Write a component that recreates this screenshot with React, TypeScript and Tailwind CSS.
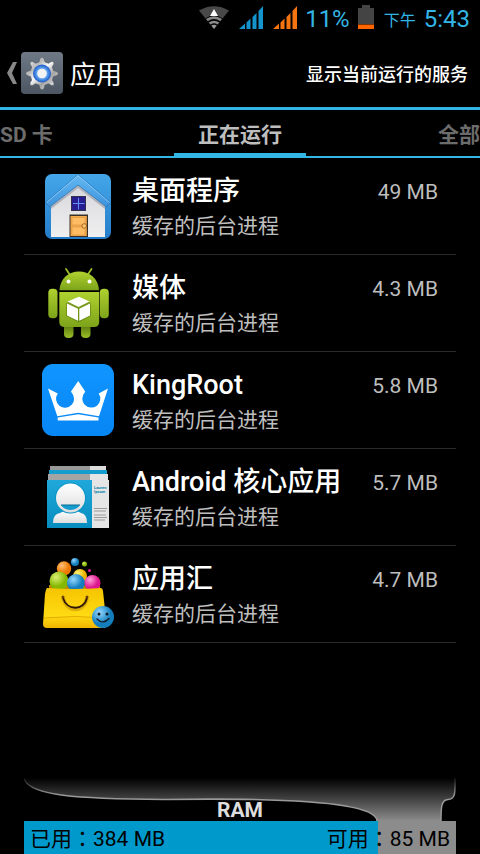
import { useState, type ReactNode } from 'react';
import { clsx } from 'clsx';

interface RunningApp {
  id: string;
  name: string;
  status: string;
  memory: string;
  icon: ReactNode;
}

const USED_MB = 384;
const FREE_MB = 85;

function WifiIcon() {
  return (
    <svg viewBox="0 0 30 23" className="h-[23px] w-[30px]" aria-hidden="true">
      <path d="M0 4.500Q15-4 30 4.500L15 23Z" fill="#484848" />
      <path d="M6.500 12.500Q15 6 23.500 12.500L15 23Z" fill="#000" />
      <path d="M7 13Q15 7.500 23 13L21.200 15.300Q15 10.800 8.800 15.300Z" fill="#858585" />
      <path d="M9.800 16.500Q15 12.800 20.200 16.500L18.500 18.600Q15 16 11.500 18.600Z" fill="#8d8d8d" />
      <path d="M12.300 19.500Q15 17.800 17.700 19.500L15 23Z" fill="#999" />
      <path d="M15 3L19 10H11Z" fill="#fff" />
    </svg>
  );
}

function SignalIcon({ color }: { color: string }) {
  return (
    <svg viewBox="0 0 24 23" className="h-[23px] w-6" fill={color} aria-hidden="true">
      <path d="M0 23L6 17.500V23ZM7.500 16.500L11.500 12.500V23H7.500ZM13.500 11L17.500 7V23H13.500ZM19.500 5L24 0V23H19.500Z" />
    </svg>
  );
}

function BatteryIcon() {
  return (
    <svg viewBox="0 0 16 24" className="h-6 w-4" aria-hidden="true">
      <path d="M4 0H12V3H16V19H0V3H4Z" fill="#444" />
      <path d="M0 19.500H16V24H0Z" fill="#f60" />
    </svg>
  );
}

function SettingsIcon() {
  return (
    <svg viewBox="0 0 42 42" className="size-[42px]" aria-hidden="true">
      <defs>
        <linearGradient id="settings-bg" x2="0" y2="1">
          <stop stopColor="#6f7a86" />
          <stop offset="1" stopColor="#4c5663" />
        </linearGradient>
        <linearGradient id="settings-gear" gradientUnits="userSpaceOnUse" x1="8" y1="8" x2="34" y2="35">
          <stop stopColor="#e8e8e8" />
          <stop offset=".25" stopColor="#b9b9b9" />
          <stop offset=".45" stopColor="#fafafa" />
          <stop offset=".7" stopColor="#a2a2a2" />
          <stop offset="1" stopColor="#f0f0f0" />
        </linearGradient>
        <radialGradient id="settings-ring">
          <stop offset=".45" stopColor="#7dbcff" />
          <stop offset="1" stopColor="#1758c6" />
        </radialGradient>
      </defs>
      <rect width="42" height="42" rx="4" fill="url(#settings-bg)" />
      <path
        d="M19 6.500Q21 4 23 6.500L24 10L27.500 11.300L30.500 9.500Q33.500 9 33 12L31.300 15L32.500 18.500L36 19.500Q38.500 21.500 36 23.500L32.500 24.500L31.300 28L33 31Q33.500 34 30.500 33.500L27.500 31.700L24 33L23 36.500Q21 39 19 36.500L18 33L14.500 31.700L11.500 33.500Q8.500 34 9 31L10.700 28L9.500 24.500L6 23.500Q3.500 21.500 6 19.500L9.500 18.500L10.700 15L9 12Q8.500 9 11.500 9.500L14.500 11.300L18 10Z"
        fill="url(#settings-gear)"
        stroke="#454e59"
        strokeWidth=".5"
      />
      <circle cx="21" cy="21.500" r="9" fill="url(#settings-ring)" />
      <circle cx="21" cy="21.500" r="4.800" fill="#f3f3f3" />
    </svg>
  );
}

function HomeAppIcon() {
  return (
    <svg viewBox="0 0 72 72" className="size-[72px]" aria-hidden="true">
      <defs>
        <linearGradient id="home-sky" x2="0" y2="1">
          <stop stopColor="#45a7ea" />
          <stop offset="1" stopColor="#247cc9" />
        </linearGradient>
        <linearGradient id="home-roof" x2="0" y2="1">
          <stop stopColor="#64b8f2" />
          <stop offset="1" stopColor="#3d93dc" />
        </linearGradient>
        <linearGradient id="home-wall" x2="0" y2="1">
          <stop stopColor="#d5d5da" />
          <stop offset="1" stopColor="#f0f0f0" />
        </linearGradient>
      </defs>
      <rect x="3" y="4" width="66" height="65" rx="7" fill="url(#home-sky)" />
      <path d="M9 33L36 11L63 33V67H9Z" fill="url(#home-wall)" />
      <path d="M9 35L36 14L63 35V39L36 18L9 39Z" fill="#aeb2ba" />
      <path d="M3.500 32.500L36 4.500L68.500 32.500L64.500 37L36 15L7.500 37Z" fill="url(#home-roof)" stroke="#2570b3" strokeWidth=".7" />
      <path d="M4.500 32.500L36 5.500L67.500 32.500" fill="none" stroke="#94d2fb" strokeWidth=".8" />
      <rect x="29.500" y="26.500" width="14" height="14" fill="#271e91" stroke="#343150" />
      <path d="M36.500 28V39.500M31 33.500H42.500" stroke="#668df5" strokeWidth="1" />
      <path d="M27.500 44.500H46V67H27.500Z" fill="#393127" />
      <path d="M28.500 46H44.800V66H28.500Z" fill="#f6ac4c" />
      <path d="M30 47.500H43V55H30ZM30 57H43V65H30Z" fill="#ffbd63" stroke="#d08a38" strokeWidth=".5" />
      <circle cx="42.200" cy="56" r="2.300" fill="#ffc568" stroke="#8c5320" strokeWidth=".8" />
    </svg>
  );
}

function AndroidAppIcon() {
  return (
    <svg viewBox="0 0 72 72" className="size-[72px]" aria-hidden="true">
      <defs>
        <linearGradient id="android-green" x2="0" y2="1">
          <stop stopColor="#afd12f" />
          <stop offset="1" stopColor="#7da31a" />
        </linearGradient>
        <linearGradient id="android-leg" x2="0" y2="1">
          <stop stopColor="#587510" />
          <stop offset="1" stopColor="#9ac025" />
        </linearGradient>
      </defs>
      <path d="M24 2L28 8M49.500 2L45.500 8" stroke="#9bbd27" strokeWidth="1.800" strokeLinecap="round" />
      <path d="M22 58H31.500V67Q31.500 71 26.700 71T22 67ZM39 58H48.500V67Q48.500 71 43.700 71T39 67Z" fill="url(#android-leg)" />
      <path d="M17.500 23.300C18 11 27 4.500 37 4.500S56.500 11 57 23.300Z" fill="url(#android-green)" />
      <circle cx="26.500" cy="14.500" r="2" fill="#fff" />
      <circle cx="47.500" cy="14.500" r="2" fill="#fff" />
      <rect x="6.300" y="21.700" width="9.200" height="29.600" rx="4" fill="url(#android-green)" />
      <rect x="57.800" y="21.700" width="9" height="29.600" rx="4" fill="url(#android-green)" />
      <path d="M17.300 25H57.200V55Q57.200 60 52 60H22.500Q17.300 60 17.300 55Z" fill="url(#android-green)" />
      <path d="M24 36L36.500 31L49 36V49L37 55.500L24 49Z" fill="#5f7f13" opacity=".6" />
      <path d="M25.500 34.500L37 29.700L47.500 34.500L36.500 40ZM25 36.500L36 41.800V53.700L25 48.500ZM48 36.500L37.300 41.800V53.700L48 48.500Z" fill="#fff" />
    </svg>
  );
}

function KingRootIcon() {
  return (
    <svg viewBox="0 0 72 72" className="size-[72px]" aria-hidden="true">
      <defs>
        <linearGradient id="king-bg" x2="0" y2="1">
          <stop stopColor="#1095ff" />
          <stop offset="1" stopColor="#0786f5" />
        </linearGradient>
      </defs>
      <rect width="72" height="72" rx="11" fill="url(#king-bg)" />
      <path
        d="M6 24.500L15.800 29.500A9 9 0 1 0 29.500 28.500L29 27.500L36.200 17L43.200 27.500L42.700 28.500A9 9 0 1 0 56.700 29.500L66 24.500L57 52.200L36.200 48.800L15.300 52.200Z"
        fill="#fff"
      />
      <path d="M15.700 53.500L36.200 50.300L56.500 53.500V56.500H15.700Z" fill="#fff" />
    </svg>
  );
}

function ContactsIcon() {
  return (
    <svg viewBox="0 -2 72 72" className="size-[72px]" aria-hidden="true">
      <defs>
        <linearGradient id="contact-card" x2="0" y2="1">
          <stop stopColor="#20a8da" />
          <stop offset="1" stopColor="#058dbf" />
        </linearGradient>
        <linearGradient id="contact-face" x2="0" y2="1">
          <stop stopColor="#fff" />
          <stop offset="1" stopColor="#dedede" />
        </linearGradient>
      </defs>
      <path d="M8 3H48V8H8Z" fill="#999" />
      <path d="M48 3H64V8H48Z" fill="#ddd" />
      <path d="M7 7H65V12H7Z" fill="#159dce" />
      <path d="M6 11H48V17H6Z" fill="#a4a4a4" />
      <path d="M48 11H66V17H48Z" fill="#e5e5e5" />
      <path d="M5 17H50V65H5Z" fill="url(#contact-card)" />
      <path d="M50 17H67V65H50Z" fill="#e5e5e5" />
      <path d="M11 60Q11 51 18 50L24 47H33L39 50Q45 51 45 60Z" fill="url(#contact-face)" />
      <circle cx="28.500" cy="35" r="15.500" fill="#0d94c6" />
      <circle cx="28.500" cy="35" r="14.500" fill="url(#contact-face)" />
      <path d="M19 42H38C34 48.500 23 48.500 19 42Z" fill="#149cce" />
      <path d="M19 42H38" stroke="#076d94" strokeWidth="1" />
      <text x="52" y="26" fill="#0781ac" fontSize="4" fontWeight="700" fontFamily="Roboto, sans-serif">Lauren</text>
      <text x="52" y="30" fill="#0781ac" fontSize="4" fontWeight="700" fontFamily="Roboto, sans-serif">Ipsum</text>
      <path d="M52 45.500H65M52 48H64M52 52H64M52 54.500H65M52 57H63" stroke="#888" strokeWidth=".8" />
    </svg>
  );
}

function MarketIcon() {
  return (
    <svg viewBox="-2 -1 76 76" className="size-[76px]" aria-hidden="true">
      <defs>
        <linearGradient id="market-bag" x2="0" y2="1">
          <stop stopColor="#f5c400" />
          <stop offset=".7" stopColor="#ffdb14" />
          <stop offset="1" stopColor="#efb500" />
        </linearGradient>
        <radialGradient id="ball-orange" cx=".35" cy=".3"><stop stopColor="#ffc078" /><stop offset="1" stopColor="#ed7900" /></radialGradient>
        <radialGradient id="ball-green" cx=".35" cy=".3"><stop stopColor="#dcee73" /><stop offset="1" stopColor="#84b800" /></radialGradient>
        <radialGradient id="ball-blue" cx=".35" cy=".3"><stop stopColor="#94d8ff" /><stop offset="1" stopColor="#147ebd" /></radialGradient>
        <radialGradient id="ball-pink" cx=".35" cy=".3"><stop stopColor="#ff9fdc" /><stop offset="1" stopColor="#dc178d" /></radialGradient>
        <radialGradient id="ball-yellow" cx=".35" cy=".3"><stop stopColor="#fff276" /><stop offset="1" stopColor="#edb200" /></radialGradient>
      </defs>
      <circle cx="33" cy="5" r="4" fill="url(#ball-blue)" />
      <circle cx="42.500" cy="7" r="2.500" fill="url(#ball-green)" />
      <circle cx="47.500" cy="13.500" r="1.500" fill="#e51a91" />
      <circle cx="22" cy="11.500" r="7.200" fill="url(#ball-orange)" />
      <circle cx="38" cy="19" r="7" fill="url(#ball-yellow)" />
      <path d="M7 28H58V36H7Z" fill="#bd8600" />
      <circle cx="17" cy="24" r="9.500" fill="url(#ball-green)" />
      <circle cx="34" cy="26" r="9" fill="url(#ball-blue)" />
      <circle cx="50.500" cy="26" r="8" fill="url(#ball-pink)" />
      <path d="M5 31Q32 33 59 31Q60.500 31 61 34L64.500 67Q65 71 61 71H5Q1 71 1 67L3 37Q4 32 5 31Z" fill="url(#market-bag)" />
      <path d="M2 61Q33 58 64 61" fill="none" stroke="#e2ad00" strokeWidth="1" />
      <path d="M21 41C25 56 42 56 45 41" fill="none" stroke="#ac7500" strokeWidth="4" opacity=".4" />
      <path d="M21 41C25 54 42 54 45 41" fill="none" stroke="#2d1608" strokeWidth="1.800" strokeLinecap="round" />
      <circle cx="21" cy="40" r="1.500" fill="#704000" />
      <circle cx="45" cy="40" r="1.500" fill="#704000" />
      <circle cx="61" cy="60" r="11" fill="url(#ball-blue)" />
      <circle cx="57" cy="57" r="1.500" fill="#101820" />
      <circle cx="65" cy="57" r="1.500" fill="#101820" />
      <path d="M55 62Q61 68 67 61.500" fill="none" stroke="#101820" strokeWidth="1.300" strokeLinecap="round" />
    </svg>
  );
}

const apps: RunningApp[] = [
  { id: 'launcher', name: '桌面程序', status: '缓存的后台进程', memory: '49 MB', icon: <HomeAppIcon /> },
  { id: 'media', name: '媒体', status: '缓存的后台进程', memory: '4.3 MB', icon: <AndroidAppIcon /> },
  { id: 'kingroot', name: 'KingRoot', status: '缓存的后台进程', memory: '5.8 MB', icon: <KingRootIcon /> },
  { id: 'core', name: 'Android 核心应用', status: '缓存的后台进程', memory: '5.7 MB', icon: <ContactsIcon /> },
  { id: 'market', name: '应用汇', status: '缓存的后台进程', memory: '4.7 MB', icon: <MarketIcon /> },
];

const tabs = [
  { id: 'sd', label: 'SD 卡', align: 'text-left' },
  { id: 'running', label: '正在运行', align: 'text-center' },
  { id: 'all', label: '全部', align: 'text-right' },
];

function StatusBar() {
  return (
    <div className="flex h-[38px] items-center justify-end pr-2.5 text-2xl text-[#33b5e5]">
      <div className="flex gap-2.5 pb-1">
        <WifiIcon />
        <SignalIcon color="#1593cc" />
        <SignalIcon color="#f5740f" />
      </div>
      <span className="mx-2">11%</span>
      <div className="pb-1">
        <BatteryIcon />
      </div>
      <span className="ml-2.5 mr-2 pt-1 text-base">下午</span>
      <span>5:43</span>
    </div>
  );
}

function MemoryUsage() {
  const usedPercent = (USED_MB / (USED_MB + FREE_MB)) * 100;

  return (
    <footer className="mt-auto px-6 text-[21px]">
      <div className="relative">
        <svg viewBox="0 0 432 43" preserveAspectRatio="none" className="block h-[43px] w-full" aria-hidden="true">
          <defs>
            <linearGradient id="ram-fill" gradientUnits="userSpaceOnUse" x1="0" y1="0" x2="0" y2="43">
              <stop stopColor="#000" />
              <stop offset=".5" stopColor="#444" />
              <stop offset="1" stopColor="#8c8c8c" />
            </linearGradient>
            <linearGradient id="ram-line" gradientUnits="userSpaceOnUse" x1="0" y1="0" x2="0" y2="43">
              <stop stopColor="#111" />
              <stop offset=".4" stopColor="#999" />
              <stop offset="1" stopColor="#999" />
            </linearGradient>
          </defs>
          <path
            d="M0 0C4 18 54 21 140 21.500C240 20 352 22 353 43H417C417 30 417 22 424 21.500C432 21 431 14 431 0Z"
            fill="url(#ram-fill)"
          />
          <path
            d="M0 0C4 18 54 21 140 21.500C240 20 352 22 353 43M417 43C417 30 417 22 424 21.500C432 21 431 14 431 0"
            fill="none"
            stroke="url(#ram-line)"
            strokeWidth="1.500"
          />
        </svg>
        <h2 className="absolute inset-x-0 bottom-0 text-center font-bold leading-[22px] text-[#ddd]">RAM</h2>
      </div>
      <div className="relative flex h-[33px] items-center justify-between bg-[#8c8c8c] px-1.5 pt-1 text-black">
        <div className="absolute inset-y-0 left-0 bg-[#0099cc]" style={{ width: `${usedPercent}%` }} />
        <span className="relative">已用：{USED_MB} MB</span>
        <span className="relative">可用：{FREE_MB} MB</span>
      </div>
    </footer>
  );
}

export default function App() {
  const [activeTab, setActiveTab] = useState('running');

  return (
    <div className="flex min-h-screen flex-col overflow-x-hidden bg-black font-[Roboto,'Noto_Sans_CJK_TC',sans-serif] text-white">
      <StatusBar />

      {/* Action bar */}
      <header className="flex h-[72px] items-center border-b-3 border-[#33b5e5] pr-3">
        <button type="button" className="flex items-center pl-[7px]">
          <svg viewBox="0 0 10 22" className="mr-1 h-[22px] w-2.5" aria-hidden="true">
            <path d="M10 0H6L0 11L6 22H10L5 11Z" fill="#888" />
          </svg>
          <SettingsIcon />
          <span className="ml-[7px] font-['Noto_Sans_CJK_SC',sans-serif] text-[26px] leading-8">应用</span>
        </button>
        <button type="button" className="ml-auto font-['Noto_Sans_CJK_SC',sans-serif] text-lg font-medium">
          显示当前运行的服务
        </button>
      </header>

      <nav className="grid h-12 grid-cols-[1fr_132px_1fr] border-b-2 border-[#33b5e5] font-[Roboto,'Noto_Sans_CJK_SC',sans-serif]">
        {tabs.map((tab) => (
          <button
            key={tab.id}
            type="button"
            onClick={() => setActiveTab(tab.id)}
            className={clsx(
              'whitespace-nowrap border-b-3 pt-2 text-[21px] font-bold',
              tab.align,
              activeTab === tab.id ? 'border-[#33b5e5] text-[#bebebe]' : 'border-transparent text-[#6c6c6c]',
            )}
          >
            {tab.label}
          </button>
        ))}
      </nav>

      {/* Running processes */}
      <ul className="px-6 font-[Roboto,'Noto_Sans_CJK_SC',sans-serif]">
        {apps.map((app) => (
          <li key={app.id} className="flex h-[97px] border-b border-[#2a2a2a] pr-[18px]">
            <div className="flex w-[108px] shrink-0 items-center justify-center">{app.icon}</div>
            <div className="min-w-0 flex-1 pt-4">
              <h3 className="truncate text-[27px] font-medium leading-[34px]">{app.name}</h3>
              <p className="truncate text-[21px] leading-9 text-[#bebebe]">{app.status}</p>
            </div>
            <span className="shrink-0 pt-5 text-[21px] leading-7 text-[#bebebe]">{app.memory}</span>
          </li>
        ))}
      </ul>

      <MemoryUsage />
    </div>
  );
}
